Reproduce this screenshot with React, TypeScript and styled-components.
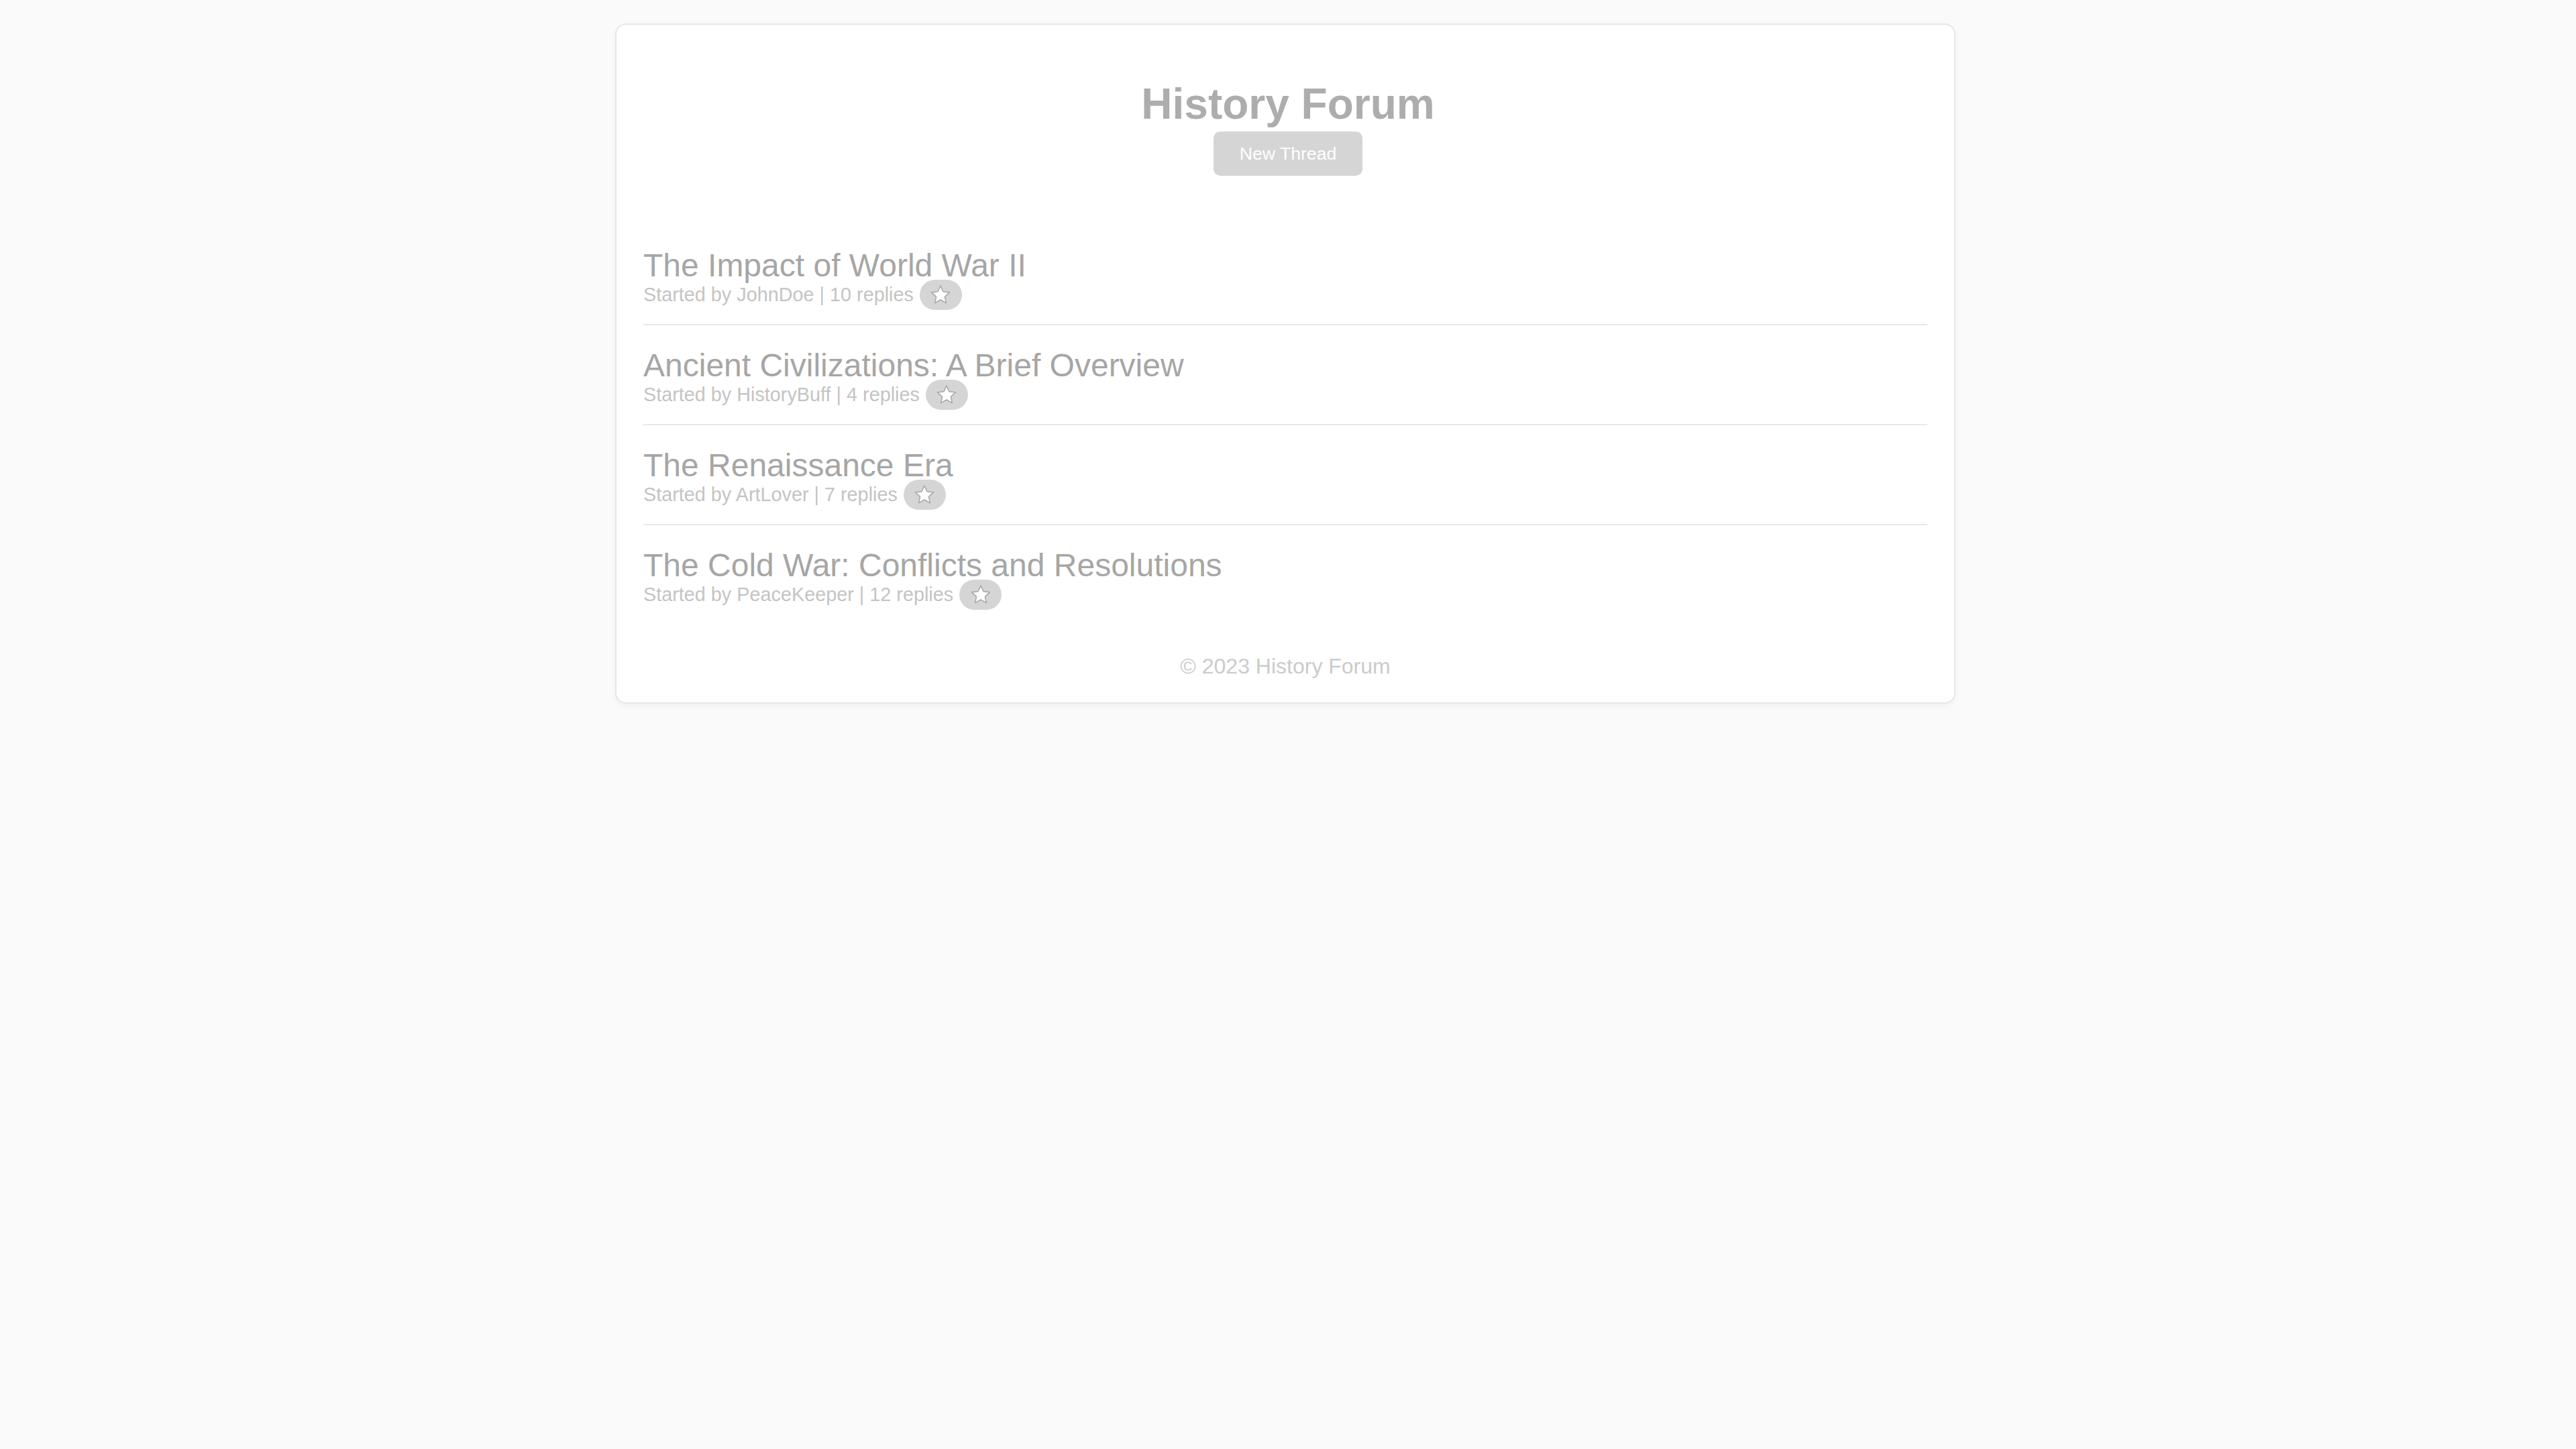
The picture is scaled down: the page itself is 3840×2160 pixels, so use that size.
import React from "react";
import styled, { createGlobalStyle } from "styled-components";

const GlobalStyle = createGlobalStyle`
  html, body {
    margin: 0;
    padding: 0;
    background: #fafafa;
    font-family: "Liberation Sans", Arial, sans-serif;
  }
  * { box-sizing: border-box; }
`;

const Page = styled.div`
  padding-top: 35px;
  min-height: 2160px;
  background: #fafafa;
`;

const Card = styled.main`
  width: 1998px;
  margin-left: calc(50% - 1003px);
  background: #ffffff;
  border: 2px solid #e6e6e6;
  border-radius: 16px;
  box-shadow: 0 4px 10px rgba(0, 0, 0, 0.04);
  padding: 40px 40px 35px;
`;

const Header = styled.header`
  display: flex;
  flex-direction: column;
  align-items: center;
  padding-left: 8px;
  margin-bottom: 40px;
`;

const Title = styled.h1`
  margin: 41px 0 4px;
  font-size: 64px;
  line-height: 74px;
  font-weight: 700;
  color: #adadad;
`;

const NewButton = styled.button`
  height: 66px;
  padding: 0 39px;
  border: none;
  border-radius: 10px;
  background: #d5d5d5;
  color: #ffffff;
  font-family: "Liberation Sans", Arial, sans-serif;
  font-size: 26.67px;
  cursor: pointer;
`;

const ThreadList = styled.ul`
  list-style: none;
  margin: 74px 0 0;
  padding: 0;
`;

const ThreadItem = styled.li<{ $last?: boolean }>`
  padding: 32px 0 27px;
  border-bottom: ${(p) => (p.$last ? "none" : "2px solid #e8e8e8")};
`;

const ThreadTitle = styled.h3`
  margin: 0;
  font-size: 48px;
  line-height: 55px;
  font-weight: 400;
  color: #a6a6a6;
`;

const Meta = styled.div`
  display: flex;
  align-items: center;
  gap: 9px;
  height: 33px;
  font-size: 28.8px;
  line-height: 33px;
  color: #c4c4c4;
`;

const Badge = styled.span`
  flex: none;
  display: flex;
  align-items: center;
  justify-content: center;
  width: 63px;
  height: 45px;
  border-radius: 23px;
  background: #d5d5d5;
`;

const Footer = styled.footer`
  margin-top: 45px;
  text-align: center;
  font-size: 32px;
  line-height: 37px;
  color: #cbcbcb;
`;

const Star = () => (
  <svg width="34" height="34" viewBox="0 0 24 24">
    <path
      d="M12 2.2l2.85 6.1 6.65.78-4.95 4.55 1.35 6.62L12 16.95l-5.9 3.3 1.35-6.62L2.5 9.08l6.65-.78z"
      fill="#ffffff"
      stroke="#a8a8a8"
      strokeWidth="1.1"
      strokeLinejoin="round"
    />
  </svg>
);

const threads = [
  { title: "The Impact of World War II", author: "JohnDoe", replies: 10 },
  { title: "Ancient Civilizations: A Brief Overview", author: "HistoryBuff", replies: 4 },
  { title: "The Renaissance Era", author: "ArtLover", replies: 7 },
  { title: "The Cold War: Conflicts and Resolutions", author: "PeaceKeeper", replies: 12 },
];

export default function App() {
  return (
    <Page>
      <GlobalStyle />
      <Card>
        <Header>
          <Title>History Forum</Title>
          <NewButton>New Thread</NewButton>
        </Header>
        <ThreadList>
          {threads.map((t, i) => (
            <ThreadItem key={t.title} $last={i === threads.length - 1}>
              <ThreadTitle>{t.title}</ThreadTitle>
              <Meta>
                <span>
                  Started by {t.author} | {t.replies} replies
                </span>
                <Badge>
                  <Star />
                </Badge>
              </Meta>
            </ThreadItem>
          ))}
        </ThreadList>
        <Footer>© 2023 History Forum</Footer>
      </Card>
    </Page>
  );
}
